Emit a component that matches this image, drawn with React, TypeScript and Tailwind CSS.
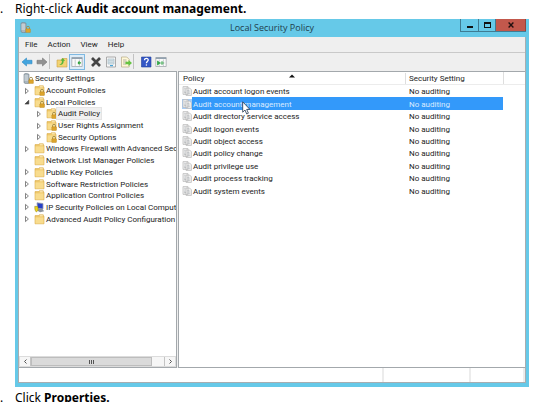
import React from 'react';

type Node = { label: string; level: number; arrow?: 'open' | 'closed'; icon: 'server' | 'locked' | 'folder' | 'computer'; selected?: boolean };

const nodes: Node[] = [
  { label: 'Security Settings', level: 0, icon: 'server' },
  { label: 'Account Policies', level: 1, arrow: 'closed', icon: 'locked' },
  { label: 'Local Policies', level: 1, arrow: 'open', icon: 'locked' },
  { label: 'Audit Policy', level: 2, arrow: 'closed', icon: 'locked', selected: true },
  { label: 'User Rights Assignment', level: 2, arrow: 'closed', icon: 'locked' },
  { label: 'Security Options', level: 2, arrow: 'closed', icon: 'locked' },
  { label: 'Windows Firewall with Advanced Secu', level: 1, arrow: 'closed', icon: 'folder' },
  { label: 'Network List Manager Policies', level: 1, icon: 'folder' },
  { label: 'Public Key Policies', level: 1, arrow: 'closed', icon: 'folder' },
  { label: 'Software Restriction Policies', level: 1, arrow: 'closed', icon: 'folder' },
  { label: 'Application Control Policies', level: 1, arrow: 'closed', icon: 'folder' },
  { label: 'IP Security Policies on Local Compute', level: 1, arrow: 'closed', icon: 'computer' },
  { label: 'Advanced Audit Policy Configuration', level: 1, arrow: 'closed', icon: 'folder' },
];

const policies = [
  'Audit account logon events',
  'Audit account management',
  'Audit directory service access',
  'Audit logon events',
  'Audit object access',
  'Audit policy change',
  'Audit privilege use',
  'Audit process tracking',
  'Audit system events',
];

function Padlock() {
  return (
    <>
      <path d="M6.5 7V5.8a1.5 1.5 0 0 1 3 0V7" fill="none" stroke="#a08a4a" strokeWidth="0.9" />
      <rect x="5.8" y="6.8" width="4.6" height="3.8" rx="0.5" fill="#dda52c" stroke="#b58420" strokeWidth="0.4" />
    </>
  );
}

function ServerIcon() {
  return (
    <svg viewBox="0 0 11 11" className="h-[11px] w-[11px] shrink-0" aria-hidden="true">
      <path d="M1 1.2 3 0.2l3 1v9L3 10.8l-2-1z" fill="#a9b5bd" stroke="#72808a" strokeWidth="0.6" />
      <path d="M1.4 3h3.8M1.4 5h3.8M1.4 7h3.8" stroke="#e9eff2" strokeWidth="0.8" />
      <Padlock />
    </svg>
  );
}

function FolderIcon({ locked }: { locked?: boolean }) {
  return (
    <svg viewBox="0 0 11 11" className="h-[11px] w-[11px] shrink-0" aria-hidden="true">
      <path d="M1 1.6h3.4l.9-.8h4v1.4h.7v7.6H1z" fill="#efc96b" stroke="#d7aa48" strokeWidth="0.6" />
      <path d="M1.5 3.4h8v6h-8z" fill="#f8dc8e" />
      <path d="M5.8 1.8h3" stroke="#fff8de" strokeWidth="0.8" />
      {locked && <Padlock />}
    </svg>
  );
}

function ComputerIcon() {
  return (
    <svg viewBox="0 0 11 11" className="h-[11px] w-[11px] shrink-0" aria-hidden="true">
      <path d="M3 .8 9 1.5v5.4L3.4 6.4z" fill="#2540c8" stroke="#9aa0ab" strokeWidth="0.8" />
      <path d="M4.5 7h4l1.6 2.2-4 1L3 8.6z" fill="#8c939c" />
      <path d="M.8 4.2 4 4.8v3.4c-.5 1-1 1.4-1.6 1.8C1 8.8.7 7.4.8 4.2z" fill="#ecd51c" stroke="#8a7b16" strokeWidth="0.5" />
    </svg>
  );
}

function Arrow({ state }: { state?: 'open' | 'closed' }) {
  return (
    <svg viewBox="0 0 8 8" className="h-2 w-2 shrink-0" aria-hidden="true">
      {state === 'closed' && <path d="M2.5 1.4v5.2L5.4 4z" fill="#fff" stroke="#666" strokeWidth="0.8" />}
      {state === 'open' && <path d="M5.8 2.2v3.9H1.9z" fill="#444" stroke="#333" strokeWidth="0.5" />}
    </svg>
  );
}

const indent = ['pl-1', 'pl-1', 'pl-4'];

function TreeRow({ node }: { node: Node }) {
  return (
    <li className={`flex min-h-0 items-center whitespace-nowrap ${indent[node.level]}`}>
      {node.level > 0 && <span className="mr-[3px] flex"><Arrow state={node.arrow} /></span>}
      {node.icon === 'server' && <ServerIcon />}
      {node.icon === 'computer' && <ComputerIcon />}
      {node.icon === 'locked' && <FolderIcon locked />}
      {node.icon === 'folder' && <FolderIcon />}
      <span className={`flex h-[11px] items-center px-px ${node.selected ? 'bg-[#f0f0f0] outline outline-[#e4e4e4]' : ''}`}>{node.label}</span>
    </li>
  );
}

function PolicyIcon() {
  return (
    <svg viewBox="0 0 10 10" className="h-[10px] w-[10px] shrink-0" aria-hidden="true">
      <path d="M1 .6h5v7.8H1zM4 2h3.6l1.8 1.8v5.6H4z" fill="#f2f2f2" stroke="#b4b4b4" strokeWidth="0.7" />
      <path d="M2 2.3h1.5M2 4h1.5M2 5.7h1.5M5.2 4.5h2.2M5.2 6h3M5.2 7.6h3" stroke="#b0b6ba" strokeWidth="0.6" />
      <path d="M2 7.2 3 6.3l1 .9" fill="none" stroke="#8c9294" strokeWidth="0.5" />
    </svg>
  );
}

function Tool({ label, active, children }: { label: string; active?: boolean; children: React.ReactNode }) {
  return (
    <button type="button" aria-label={label} className={`flex h-4 items-center justify-center ${active ? 'w-4 border border-[#7fb9e2] bg-[#dcecf8]' : 'w-[15px]'}`}>
      <svg viewBox="0 0 12 12" className="h-3 w-3 shrink-0" aria-hidden="true">{children}</svg>
    </button>
  );
}

function PanelGlyph() {
  return (
    <>
      <path d="M.8 1.5h10.4v9H.8z" fill="#fafafa" stroke="#a3a8ad" strokeWidth="0.8" />
      <path d="M.8 2.2h10.4" stroke="#8798a8" strokeWidth="1.4" />
      <path d="M4.2 3.5v7M8.4 3.5v7" stroke="#b3b9be" strokeWidth="0.7" />
    </>
  );
}

function Toolbar() {
  return (
    <div role="toolbar" className="flex h-[18px] items-center pb-px">
      <Tool label="Back"><path d="M1 6 5.5 2v2.3H11v3.5H5.5V10z" fill="#43a5df" stroke="#3089c3" strokeWidth="0.6" /></Tool>
      <Tool label="Forward"><path d="M11 6 6.5 2v2.3H1v3.5h5.5V10z" fill="#929292" stroke="#777" strokeWidth="0.6" /></Tool>
      <span className="mr-1 h-[15px] w-px bg-[#c2c2c2]" />
      <Tool label="Up one level">
        <path d="M1 4h4l1-1.5h5V11H1z" fill="#f3d373" stroke="#c9a045" strokeWidth="0.6" />
        <path d="M3 8.5c2 0 3-1.4 3-3.7H4.6L6.8 2l2.3 2.8H7.7C7.7 8 6 9.8 3 8.5z" fill="#57b63c" />
      </Tool>
      <Tool label="Show or hide console tree" active><PanelGlyph /><path d="M10 6.9H7m0 0 1.5-1.5M7 6.9l1.5 1.5" stroke="#2fa23b" strokeWidth="1.1" fill="none" /></Tool>
      <span className="w-[3px]" />
      <Tool label="Delete"><path d="m2 2 8 8M10 2l-8 8" stroke="#454545" strokeWidth="2.7" /></Tool>
      <Tool label="Properties">
        <path d="M1.5 1h9v10h-9z" fill="#f7f7f7" stroke="#999" strokeWidth="0.8" />
        <path d="M3 3h6v5H3z" fill="#dbe8ee" stroke="#a3b6c0" strokeWidth="0.6" />
        <path d="M3.5 4.7h5M3.5 6.3h5" stroke="#a4b4bd" strokeWidth="0.5" /><path d="M5 9.6h3" stroke="#47a5d9" strokeWidth="1.2" />
      </Tool>
      <Tool label="Export list">
        <path d="M1.5 1h5.3l2.4 2.4V11H1.5z" fill="#fff8d7" stroke="#b4a984" strokeWidth="0.7" />
        <path d="M3 4h3.5M3 6h4M3 8h3" stroke="#929292" strokeWidth="0.7" />
        <path d="M5.5 5.8h3V4L12 7 8.5 10V8.2h-3z" fill="#65c440" />
      </Tool>
      <span className="mr-1 h-[15px] w-px bg-[#c2c2c2]" />
      <Tool label="Help">
        <path d="M1.5 1H11v10H1.5z" fill="#3457c6" stroke="#233f9a" strokeWidth="0.6" />
        <path d="M4.5 4.2c0-2.7 4-2.3 3.7 0-.2 1.3-1.8 1.4-1.8 3" fill="none" stroke="#fff" strokeWidth="1.3" /><circle cx="6.4" cy="9" r=".8" fill="#fff" />
      </Tool>
      <Tool label="Show or hide action pane"><PanelGlyph /><path d="M2.5 5v4l2.6-2zM7 5v4M5.2 7h4" stroke="#35a64a" strokeWidth="0.8" fill="#35a64a" /></Tool>
    </div>
  );
}

function TitleBar() {
  return (
    <header className="flex h-[18px] items-start">
      <span className="flex w-[66px] shrink-0 pt-[3px] pl-[2px]"><ServerIcon /></span>
      <h1 className="flex-1 text-center font-['Open_Sans','Noto_Sans',sans-serif] text-[9px] leading-[18px] text-[#1f3f4c]">Local Security Policy</h1>
      <div className="flex h-[13px] w-[66px] shrink-0 border-b border-[#3f7c93]">
        <button type="button" aria-label="Minimize" className="flex w-[19px] items-center justify-center border-x border-[#3f7c93]"><span className="mt-[3px] h-[2px] w-[6px] bg-[#111]" /></button>
        <button type="button" aria-label="Maximize" className="flex w-[17px] items-center justify-center border-r border-[#3f7c93]"><span className="h-[6px] w-[7px] border border-t-2 border-[#111]" /></button>
        <button type="button" aria-label="Close" className="flex w-[30px] items-center justify-center border-r border-[#93443b] bg-[#c2584c]">
          <svg viewBox="0 0 6 6" className="h-[6px] w-[6px]" aria-hidden="true"><path d="m.6.6 4.8 4.8M5.4.6.6 5.4" stroke="#221010" strokeWidth="1.4" /></svg>
        </button>
      </div>
    </header>
  );
}

function Step({ children }: { children: React.ReactNode }) {
  return (
    <p className="flex h-[19px] font-['Noto_Sans','Open_Sans',sans-serif] text-[12px] leading-[18px] text-black">
      <span className="w-[15px] shrink-0">.</span>
      <span className="whitespace-nowrap">{children}</span>
    </p>
  );
}

export default function App() {
  return (
    <main className="h-screen overflow-hidden bg-white font-['Roboto','Noto_Sans',sans-serif] text-[8px] leading-[11px] text-[#1c1c1c]">
      <Step>Right-click <strong>Audit account management.</strong></Step>

      <section className="mr-3 ml-[15px] bg-[#66c9e8] pr-[3px] pb-1 pl-[3px]">
        <TitleBar />
        <div className="border border-t-0 border-[#a8adb0] bg-[#efefef]">
          <nav className="flex h-4 items-center gap-[10px] border-b border-[#c9c9c9] pl-[6px]">
            <button type="button">File</button>
            <button type="button">Action</button>
            <button type="button">View</button>
            <button type="button">Help</button>
          </nav>
          <Toolbar />

          <div className="flex min-h-[297px]">
            <div className="flex w-[158px] shrink-0 flex-col overflow-hidden border-y border-r border-[#a3a8ac] bg-white">
              <ul className="grid h-[153px] auto-rows-fr pt-px">
                {nodes.map((n) => <TreeRow key={n.label} node={n} />)}
              </ul>
              <div className="mt-auto flex h-[11px] border border-[#dcdcdc] bg-[#f6f6f6]">
                <button type="button" aria-label="Scroll left" className="flex w-[11px] items-center justify-center border-r border-[#c4c4c4]">
                  <svg viewBox="0 0 5 5" className="h-[5px] w-[5px]" aria-hidden="true"><path d="M3.5.5 1.5 2.5l2 2" fill="none" stroke="#555" /></svg>
                </button>
                <span className="flex w-[121px] items-center justify-center gap-px border border-[#bdbdbd] bg-[#dadada]">
                  <i className="h-1 w-px bg-[#555]" /><i className="h-1 w-px bg-[#555]" /><i className="h-1 w-px bg-[#555]" />
                </span>
                <button type="button" aria-label="Scroll right" className="ml-auto flex w-[11px] items-center justify-center border-l border-[#c4c4c4]">
                  <svg viewBox="0 0 5 5" className="h-[5px] w-[5px]" aria-hidden="true"><path d="m1.5.5 2 2-2 2" fill="none" stroke="#555" /></svg>
                </button>
              </div>
            </div>

            <div className="relative ml-px min-w-0 flex-1 border-y border-l border-[#a3a8ac] bg-white">
              <table className="block w-full">
                <thead className="block">
                  <tr className="grid h-[13px] grid-cols-[minmax(0,1fr)_98px_22px] items-end border-b border-[#ececec] text-left">
                    <th className="pl-1 font-normal">Policy</th>
                    <th className="border-l border-[#dedede] pl-[3px] font-normal">Security Setting</th>
                    <td className="h-full border-l border-[#dedede]" />
                  </tr>
                </thead>
                <tbody className="grid h-[112px] auto-rows-fr">
                  {policies.map((p, i) => (
                    <tr key={p} className="grid grid-cols-[minmax(0,1fr)_98px_22px] items-stretch pl-[3px]">
                      <td className="flex items-center">
                        <span className={i === 1 ? 'bg-[#a9cdf5]' : ''}><PolicyIcon /></span>
                        <span className={`flex h-full flex-1 items-center pt-px pl-px ${i === 1 ? 'bg-[#3399fa] text-[#d9ebff]' : ''}`}>{p}</span>
                      </td>
                      <td className={`flex items-center pt-px pl-1 ${i === 1 ? 'bg-[#3399fa] text-[#d9ebff]' : ''}`}>No auditing</td>
                    </tr>
                  ))}
                </tbody>
              </table>
              <svg viewBox="0 0 6 4" className="absolute top-[2px] left-[110px] h-1 w-[6px]" aria-hidden="true"><path d="M0 3.5 3 .5l3 3z" fill="#111" /></svg>
              <svg viewBox="0 0 9 14" className="absolute top-[29px] left-[63px] h-[14px] w-[9px]" aria-hidden="true"><path d="M.7.8v10.4L3 9l1.7 4 1.7-.8-1.7-3.8h3.2z" fill="#fff" stroke="#25374d" strokeWidth="0.8" /></svg>
            </div>
          </div>

          <footer className="flex h-[14px] justify-end bg-white">
            <span className="w-[87px] border-l-2 border-[#ececec]" />
            <span className="w-[56px] border-x-2 border-[#ececec]" />
          </footer>
        </div>
      </section>

      <div className="pt-[2px]"><Step>Click <strong>Properties.</strong></Step></div>
    </main>
  );
}
